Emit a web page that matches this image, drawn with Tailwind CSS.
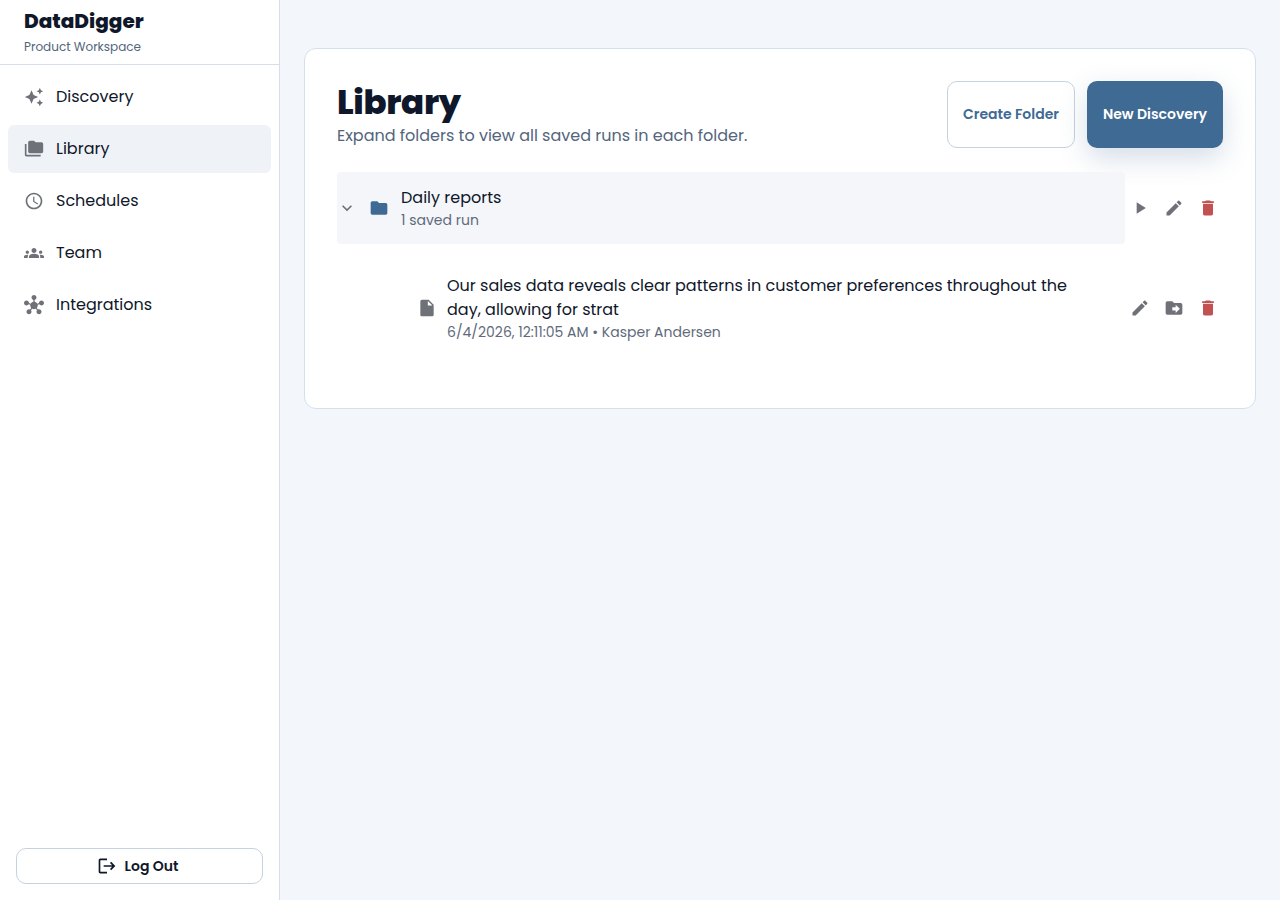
<!DOCTYPE html>
<html lang="en">
<head>
  <meta charset="UTF-8" />
  <meta name="viewport" content="width=device-width, initial-scale=1.0" />
  <title>DataDigger - Library</title>
  <script src="https://cdn.jsdelivr.net/npm/@tailwindcss/browser@4"></script>
</head>
<body class="bg-[#f3f6fb] h-screen overflow-hidden flex font-['Poppins','Inter',sans-serif] text-[#0f172a] antialiased">

  <!-- Sidebar -->
  <aside class="w-70 shrink-0 h-full bg-white border-r border-[#d5deea] flex flex-col">
    <div class="h-[65px] px-6 border-b border-[#d5deea] flex flex-col justify-center">
      <div class="text-xl leading-8 font-extrabold whitespace-nowrap -mt-0.5">DataDigger</div>
      <div class="text-xs leading-5 text-[#52657d] whitespace-nowrap">Product Workspace</div>
    </div>

    <nav class="flex flex-col gap-1 p-2">
      <a href="#" class="h-12 px-4 flex items-center gap-3 rounded-md">
        <svg class="w-5 h-5 text-[#6f7178]" fill="currentColor" viewBox="0 0 24 24"><path d="m19 9 1.25-2.75L23 5l-2.75-1.25L19 1l-1.25 2.75L15 5l2.75 1.25zm0 6-1.25 2.75L15 19l2.75 1.25L19 23l1.25-2.75L23 19l-2.75-1.25zm-7.5-5.5L9 4 6.5 9.5 1 12l5.5 2.5L9 20l2.5-5.5L17 12z"/></svg>
        <span>Discovery</span>
      </a>
      <a href="#" class="h-12 px-4 flex items-center gap-3 rounded-md bg-[#eff3f8]">
        <svg class="w-5 h-5 text-[#6f7178]" fill="currentColor" viewBox="0 0 24 24"><path d="M3 6H1v13c0 1.1.9 2 2 2h17v-2H3z"/><path d="M21 4h-7l-2-2H7c-1.1 0-1.99.9-1.99 2L5 15c0 1.1.9 2 2 2h14c1.1 0 2-.9 2-2V6c0-1.1-.9-2-2-2"/></svg>
        <span>Library</span>
      </a>
      <a href="#" class="h-12 px-4 flex items-center gap-3 rounded-md">
        <svg class="w-5 h-5 text-[#6f7178]" fill="currentColor" viewBox="0 0 24 24"><path d="M11.99 2C6.47 2 2 6.48 2 12s4.47 10 9.99 10C17.52 22 22 17.52 22 12S17.52 2 11.99 2M12 20c-4.42 0-8-3.58-8-8s3.58-8 8-8 8 3.58 8 8-3.58 8-8 8m.5-13H11v6l5.25 3.15.75-1.23-4.5-2.67z"/></svg>
        <span>Schedules</span>
      </a>
      <a href="#" class="h-12 px-4 flex items-center gap-3 rounded-md">
        <svg class="w-5 h-5 text-[#6f7178]" fill="currentColor" viewBox="0 0 24 24"><path d="M12 12.75c1.63 0 3.07.39 4.24.9 1.08.48 1.76 1.56 1.76 2.73V18H6v-1.61c0-1.18.68-2.26 1.76-2.73 1.17-.52 2.61-.91 4.24-.91M4 13c1.1 0 2-.9 2-2s-.9-2-2-2-2 .9-2 2 .9 2 2 2m1.13 1.1c-.37-.06-.74-.1-1.13-.1-.99 0-1.93.21-2.78.58C.48 14.9 0 15.62 0 16.43V18h4.5v-1.61c0-.83.23-1.61.63-2.29M20 13c1.1 0 2-.9 2-2s-.9-2-2-2-2 .9-2 2 .9 2 2 2m4 3.43c0-.81-.48-1.53-1.22-1.85-.85-.37-1.79-.58-2.78-.58-.39 0-.76.04-1.13.1.4.68.63 1.46.63 2.29V18H24zM12 6c1.66 0 3 1.34 3 3s-1.34 3-3 3-3-1.34-3-3 1.34-3 3-3"/></svg>
        <span>Team</span>
      </a>
      <a href="#" class="h-12 px-4 flex items-center gap-3 rounded-md">
        <svg class="w-5 h-5 text-[#6f7178]" fill="currentColor" viewBox="0 0 24 24"><path d="M8.4 18.2c.38.5.6 1.12.6 1.8 0 1.66-1.34 3-3 3s-3-1.34-3-3 1.34-3 3-3c.44 0 .85.09 1.23.26l1.41-1.77c-.92-1.03-1.29-2.39-1.09-3.69l-2.03-.68c-.54.83-1.46 1.38-2.52 1.38-1.66 0-3-1.34-3-3s1.34-3 3-3 3 1.34 3 3c0 .07 0 .14-.01.21l2.03.68c.64-1.21 1.82-2.09 3.22-2.32V5.91C9.96 5.57 9 4.4 9 3c0-1.66 1.34-3 3-3s3 1.34 3 3c0 1.4-.96 2.57-2.25 2.91v2.16c1.4.23 2.58 1.11 3.22 2.32l2.03-.68c0-.07-.01-.14-.01-.21 0-1.66 1.34-3 3-3s3 1.34 3 3-1.34 3-3 3c-1.06 0-1.98-.55-2.52-1.37l-2.03.68c.2 1.29-.16 2.65-1.09 3.69l1.41 1.77Q17.34 17 18 17c1.66 0 3 1.34 3 3s-1.34 3-3 3-3-1.34-3-3c0-.68.22-1.3.6-1.8l-1.41-1.77c-1.35.75-3.01.76-4.37 0z"/></svg>
        <span>Integrations</span>
      </a>
    </nav>

    <div class="mt-auto p-4">
      <button class="w-full h-9 pr-1 rounded-[10px] border border-[#c6d2e0] flex items-center justify-center gap-2 text-sm font-semibold">
        <svg class="w-5 h-5" fill="currentColor" viewBox="0 0 24 24"><path d="m17 7-1.41 1.41L18.17 11H8v2h10.17l-2.58 2.58L17 17l5-5zM4 5h8V3H4c-1.1 0-2 .9-2 2v14c0 1.1.9 2 2 2h8v-2H4z"/></svg>
        <span>Log Out</span>
      </button>
    </div>
  </aside>

  <!-- Content -->
  <main class="flex-1 px-6 py-12">
    <section class="h-[361px] bg-white border border-[#d5e0ec] rounded-xl p-8">
      <div class="flex justify-between h-[67px]">
        <div>
          <h1 class="text-[34px] leading-[43px] font-extrabold tracking-[-0.01em] whitespace-nowrap">Library</h1>
          <p class="leading-6 text-[#52657d] whitespace-nowrap">Expand folders to view all saved runs in each folder.</p>
        </div>
        <div class="flex gap-3 text-sm font-semibold whitespace-nowrap">
          <button class="w-32 pb-0.5 rounded-[10px] border border-[#c6d2e0] text-[#3e6a94]">Create Folder</button>
          <button class="w-34 pb-0.5 rounded-[10px] bg-[#3e6a94] text-white shadow-[0_10px_28px_rgba(62,100,148,0.22)]">New Discovery</button>
        </div>
      </div>

      <!-- Folder -->
      <div class="mt-6 flex items-center">
        <div class="flex-1 h-18 rounded bg-[#f4f6fa] flex items-center">
          <svg class="w-5 h-5 text-[#6f7178]" fill="currentColor" viewBox="0 0 24 24"><path d="M7.41 8.59 12 13.17l4.59-4.58L18 10l-6 6-6-6z"/></svg>
          <svg class="w-5 h-5 ml-3 text-[#3e6a94]" fill="currentColor" viewBox="0 0 24 24"><path d="M10 4H4c-1.1 0-1.99.9-1.99 2L2 18c0 1.1.9 2 2 2h16c1.1 0 2-.9 2-2V8c0-1.1-.9-2-2-2h-8z"/></svg>
          <div class="ml-3 whitespace-nowrap">
            <div class="leading-6">Daily reports</div>
            <div class="text-sm leading-5 text-[#5f6b7c]">1 saved run</div>
          </div>
        </div>
        <div class="flex gap-1 text-[#6f7178]">
          <button class="p-[5px]"><svg class="w-5 h-5" fill="currentColor" viewBox="0 0 24 24"><path d="M8 5v14l11-7z"/></svg></button>
          <button class="p-[5px]"><svg class="w-5 h-5" fill="currentColor" viewBox="0 0 24 24"><path d="M3 17.25V21h3.75L17.81 9.94l-3.75-3.75zM20.71 7.04c.39-.39.39-1.02 0-1.41l-2.34-2.34a.996.996 0 0 0-1.41 0l-1.83 1.83 3.75 3.75z"/></svg></button>
          <button class="p-[5px] text-[#c25152]"><svg class="w-5 h-5" fill="currentColor" viewBox="0 0 24 24"><path d="M6 19c0 1.1.9 2 2 2h8c1.1 0 2-.9 2-2V7H6zM19 4h-3.5l-1-1h-5l-1 1H5v2h14z"/></svg></button>
        </div>
      </div>

      <!-- Saved run -->
      <div class="mt-[30px] pl-20 flex items-center">
        <svg class="w-5 h-5 shrink-0 text-[#6f7178]" fill="currentColor" viewBox="0 0 24 24"><path d="M6 2c-1.1 0-1.99.9-1.99 2L4 20c0 1.1.89 2 1.99 2H18c1.1 0 2-.9 2-2V8l-6-6zm7 7V3.5L18.5 9z"/></svg>
        <div class="flex-1 pl-2.5 whitespace-nowrap">
          <div class="leading-6">Our sales data reveals clear patterns in customer preferences throughout the<br />day, allowing for strat</div>
          <div class="text-sm leading-5 text-[#5f6b7c]">6/4/2026, 12:11:05 AM • Kasper Andersen</div>
        </div>
        <div class="flex gap-1 text-[#6f7178]">
          <button class="p-[5px]"><svg class="w-5 h-5" fill="currentColor" viewBox="0 0 24 24"><path d="M3 17.25V21h3.75L17.81 9.94l-3.75-3.75zM20.71 7.04c.39-.39.39-1.02 0-1.41l-2.34-2.34a.996.996 0 0 0-1.41 0l-1.83 1.83 3.75 3.75z"/></svg></button>
          <button class="p-[5px]"><svg class="w-5 h-5" fill="currentColor" viewBox="0 0 24 24"><path d="M20 6h-8l-2-2H4c-1.1 0-2 .9-2 2v12c0 1.1.9 2 2 2h16c1.1 0 2-.9 2-2V8c0-1.1-.9-2-2-2m-6 12v-3h-4v-4h4V8l5 5z"/></svg></button>
          <button class="p-[5px] text-[#c25152]"><svg class="w-5 h-5" fill="currentColor" viewBox="0 0 24 24"><path d="M6 19c0 1.1.9 2 2 2h8c1.1 0 2-.9 2-2V7H6zM19 4h-3.5l-1-1h-5l-1 1H5v2h14z"/></svg></button>
        </div>
      </div>
    </section>
  </main>

</body>
</html>
